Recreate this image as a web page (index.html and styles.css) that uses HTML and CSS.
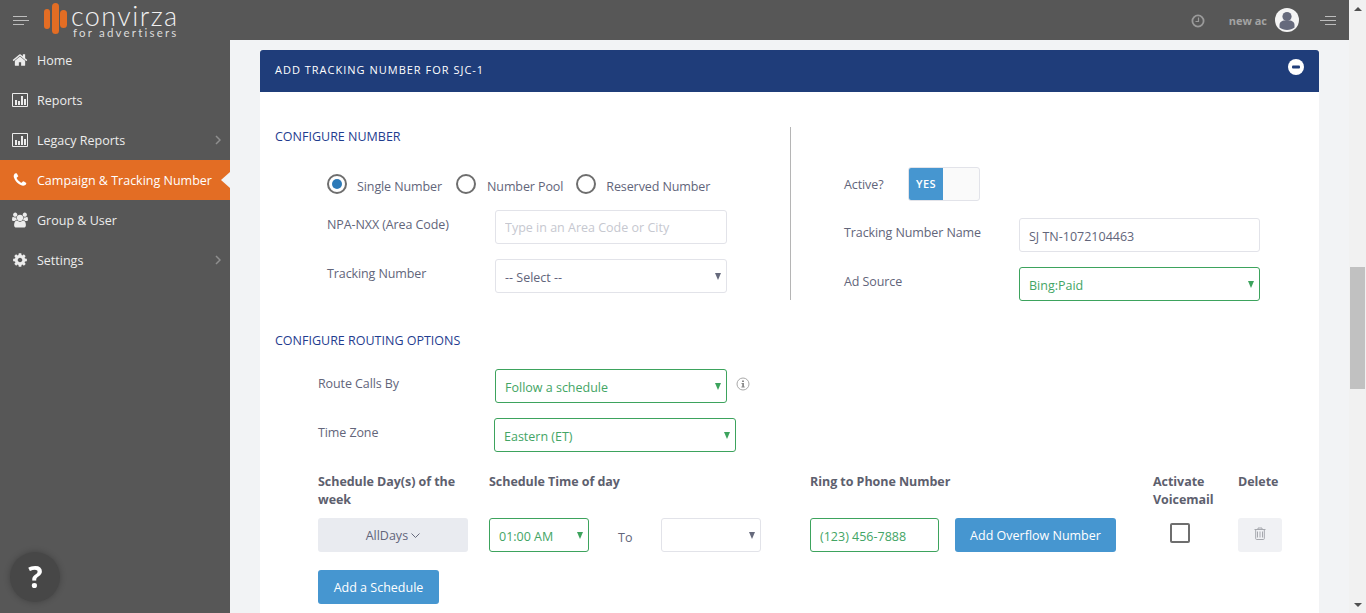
FILE: index.html
```html
<!DOCTYPE html>
<html lang="en">
<head>
    <meta charset="UTF-8">
    <title>Add Tracking Number</title>
    <link rel="stylesheet" href="styles.css">
</head>
<body>
<div class="page">
    <!-- Top bar -->
    <header class="topbar">
        <svg class="menu-icon" width="16" height="10" viewBox="0 0 16 10"><path d="M0 .5h14M0 4.500h16M0 8.500h11" stroke="#bdbdbd" fill="none"/></svg>
        <div class="logo">
            <svg class="logo-mark" width="23" height="31" viewBox="0 0 23 31"><rect x="0" y="6" width="6" height="20" rx="3" fill="#e36d24"/><rect x="8" y="0" width="7" height="31" rx="3.500" fill="#e36d24"/><rect x="16" y="7" width="7" height="18" rx="3.500" fill="#e36d24"/></svg>
            <div class="logo-text">
                <div class="logo-name">convirza</div>
                <div class="logo-sub">for advertisers</div>
            </div>
        </div>
        <div class="topbar-right">
            <svg class="clock-icon" width="14" height="14" viewBox="0 0 14 14"><circle cx="7" cy="7" r="5.600" fill="none" stroke="#9a9a9a" stroke-width="1.800"/><path d="M7.500 3.500v4H4.500" fill="none" stroke="#9a9a9a" stroke-width="1.200"/></svg>
            <span class="user-name">new ac</span>
            <svg class="avatar" width="24" height="24" viewBox="0 0 24 24"><circle cx="12" cy="12" r="12" fill="#f4f4f4"/><circle cx="12" cy="8.500" r="4.600" fill="#666a7c"/><path d="M4.500 19.500v-2.500c0-3 2.500-4.500 5-4.500h5c2.500 0 5 1.500 5 4.500v2.500c-2 1.500-4.500 2.500-7.500 2.500s-5.500-1-7.500-2.500z" fill="#666a7c"/></svg>
            <svg class="menu-icon-right" width="16" height="10" viewBox="0 0 16 10"><path d="M5 .5h11M0 4.500h16M5 8.500h11" stroke="#bdbdbd" fill="none"/></svg>
        </div>
    </header>

    <div class="main">
        <!-- Sidebar -->
        <nav class="sidebar">
            <a class="nav-item">
                <svg class="nav-icon" viewBox="0 0 1792 1792"><path d="M1472 992v480q0 26-19 45t-45 19h-384v-384h-256v384h-384q-26 0-45-19t-19-45v-480q0-1 .5-3t.5-3l575-474 575 474q1 2 1 6zm223-69l-62 74q-8 9-21 11h-3q-13 0-21-7l-692-577-692 577q-12 8-24 7-13-2-21-11l-62-74q-8-10-7-23.500t11-21.500l719-599q32-26 76-26t76 26l244 204v-195q0-14 9-23t23-9h192q14 0 23 9t9 23v408l219 182q10 8 11 21.500t-7 23.500z"/></svg>
                <span>Home</span>
            </a>
            <a class="nav-item">
                <svg class="nav-icon" viewBox="0 0 16 16"><path d="M.5 1.500h15v13H.5z" fill="none" stroke="currentColor"/><path d="M3 8h2v5H3zM6 9h2v4H6zM9 4h2v9H9zM12 7h2v6h-2z"/></svg>
                <span>Reports</span>
            </a>
            <a class="nav-item">
                <svg class="nav-icon" viewBox="0 0 16 16"><path d="M.5 1.500h15v13H.5z" fill="none" stroke="currentColor"/><path d="M3 8h2v5H3zM6 9h2v4H6zM9 4h2v9H9zM12 7h2v6h-2z"/></svg>
                <span>Legacy Reports</span>
                <svg class="nav-arrow" width="6" height="10" viewBox="0 0 6 10"><path d="M1 1l4 4-4 4" fill="none" stroke="#8f8f8f" stroke-width="1.500"/></svg>
            </a>
            <a class="nav-item active">
                <svg class="nav-icon" viewBox="0 0 1792 1792"><path d="M1600 1240q0 27-10 70.500t-21 68.500q-21 50-122 106-94 51-186 51-27 0-53-3.500t-57.500-12.500-47-14.500-55.500-20.500-49-18q-98-35-175-83-127-79-264-216t-216-264q-48-77-83-175-3-9-18-49t-20.500-55.500-14.500-47-12.500-57.500-3.500-53q0-92 51-186 56-101 106-122 25-11 68.500-21t70.500-10q14 0 21 3 18 6 53 76 11 19 30 54t35 63.500 31 53.500q3 4 17.500 25t21.500 35.500 7 28.500q0 20-28.500 50t-62 55-62 53-28.500 46q0 9 5 22.500t8.500 20.500 14 24 11.500 19q76 137 174 235t235 174q2 1 19 11.500t24 14 20.500 8.500 22.500 5q18 0 46-28.500t53-62 55-62 50-28.500q14 0 28.500 7t35.500 21.500 25 17.500q25 15 53.500 31t63.500 35 54 30q70 35 76 53 3 7 3 21z"/></svg>
                <span>Campaign &amp; Tracking Number</span>
            </a>
            <a class="nav-item">
                <svg class="nav-icon" viewBox="0 0 1920 1792"><path d="M593 896q-162 5-265 128h-134q-82 0-138-40.500t-56-118.500q0-353 124-353 6 0 43.500 21t97.500 42.500 119 21.500q67 0 133-23-5 37-5 66 0 139 81 256zm1071 637q0 120-73 189.500t-194 69.500h-874q-121 0-194-69.500t-73-189.500q0-53 3.500-103.500t14-109 26.500-108.500 43-97.500 62-81 85.500-53.500 111.500-20q10 0 43 21.500t73 48 107 48 135 21.500 135-21.500 107-48 73-48 43-21.500q61 0 111.500 20t85.500 53.500 62 81 43 97.500 26.500 108.500 14 109 3.500 103.500zm-1024-1277q0 106-75 181t-181 75-181-75-75-181 75-181 181-75 181 75 75 181zm704 384q0 159-112.500 271.500t-271.500 112.500-271.500-112.500-112.500-271.500 112.500-271.500 271.500-112.500 271.500 112.500 112.500 271.500zm576 225q0 78-56 118.500t-138 40.500h-134q-103-123-265-128 81-117 81-256 0-29-5-66 66 23 133 23 59 0 119-21.500t97.500-42.500 43.500-21q124 0 124 353zm-128-609q0 106-75 181t-181 75-181-75-75-181 75-181 181-75 181 75 75 181z"/></svg>
                <span>Group &amp; User</span>
            </a>
            <a class="nav-item">
                <svg class="nav-icon" viewBox="0 0 1792 1792"><path d="M1152 896q0-106-75-181t-181-75-181 75-75 181 75 181 181 75 181-75 75-181zm512-109v222q0 12-8 23t-20 13l-185 28q-19 54-39 91 35 50 107 138 10 12 10 25t-9 23q-27 37-99 108t-94 71q-12 0-26-9l-138-108q-44 23-91 38-16 136-29 186-7 28-36 28h-222q-14 0-24.500-8.500t-11.500-21.500l-28-184q-49-16-90-37l-141 107q-10 9-25 9-14 0-25-11-126-114-165-168-7-10-7-23 0-12 8-23 15-21 51-66.500t54-70.500q-27-50-41-99l-183-27q-13-2-21-12.500t-8-23.500v-222q0-12 8-23t19-13l186-28q14-46 39-92-40-57-107-138-10-12-10-24 0-10 9-23 26-36 98.500-107.500t94.500-71.500q13 0 26 10l138 107q44-23 91-38 16-136 29-186 7-28 36-28h222q14 0 24.500 8.500t11.500 21.500l28 184q49 16 90 37l142-107q9-9 24-9 13 0 25 10 129 119 165 170 7 8 7 22 0 12-8 23-15 21-51 66.500t-54 70.500q26 50 41 98l183 28q13 2 21 12.500t8 23.500z"/></svg>
                <span>Settings</span>
                <svg class="nav-arrow" width="6" height="10" viewBox="0 0 6 10"><path d="M1 1l4 4-4 4" fill="none" stroke="#8f8f8f" stroke-width="1.500"/></svg>
            </a>
        </nav>

        <!-- Content -->
        <main class="content">
            <div class="card">
                <div class="card-header">
                    <span class="card-title">ADD TRACKING NUMBER FOR SJC-1</span>
                    <svg class="collapse-icon" width="16" height="16" viewBox="0 0 16 16"><circle cx="8" cy="8" r="8" fill="#fff"/><rect x="4" y="6.500" width="8" height="3" rx="1" fill="#1f3d7a"/></svg>
                </div>
                <div class="card-body">
                    <div class="config-row">
                        <div class="config-left">
                            <div class="section-title">CONFIGURE NUMBER</div>
                            <div class="radio-row">
                                <label class="radio-item"><span class="radio checked"></span>Single Number</label>
                                <label class="radio-item radio-two"><span class="radio"></span>Number Pool</label>
                                <label class="radio-item"><span class="radio"></span>Reserved Number</label>
                            </div>
                            <div class="form-row indent-left">
                                <label class="form-label label-left">NPA-NXX (Area Code)</label>
                                <input class="field field-md field-search" type="text" placeholder="Type in an Area Code or City">
                            </div>
                            <div class="form-row indent-left">
                                <label class="form-label label-left">Tracking Number</label>
                                <div class="select-wrap field-md">
                                    <select class="field"><option>-- Select --</option></select>
                                </div>
                            </div>
                        </div>
                        <div class="config-right">
                            <div class="active-row">
                                <label class="form-label active-label">Active?</label>
                                <div class="toggle"><span class="toggle-on">YES</span></div>
                            </div>
                            <div class="form-row">
                                <label class="form-label label-right">Tracking Number Name</label>
                                <input class="field field-lg" type="text" value="SJ TN-1072104463">
                            </div>
                            <div class="form-row">
                                <label class="form-label label-right">Ad Source</label>
                                <div class="select-wrap valid field-lg">
                                    <select class="field"><option>Bing:Paid</option></select>
                                </div>
                            </div>
                        </div>
                    </div>

                    <div class="section-title routing-title">CONFIGURE ROUTING OPTIONS</div>
                    <div class="form-row route-row indent-route">
                        <label class="form-label label-route">Route Calls By</label>
                        <div class="select-wrap valid field-md">
                            <select class="field"><option>Follow a schedule</option></select>
                        </div>
                        <svg class="info-icon" width="14" height="14" viewBox="0 0 14 14"><circle cx="7" cy="7" r="6" fill="none" stroke="#a9a9a9"/><path d="M6 3.500h2v1.500H6zM5.500 6h2.500v3.500h.7v1H5.400v-1h.8V7h-.7z" fill="#8b8b8b"/></svg>
                    </div>
                    <div class="form-row indent-route">
                        <label class="form-label label-zone">Time Zone</label>
                        <div class="select-wrap valid field-zone">
                            <select class="field"><option>Eastern (ET)</option></select>
                        </div>
                    </div>

                    <div class="schedule-grid">
                        <div class="schedule-head head-days">Schedule Day(s) of the week</div>
                        <div class="schedule-head">Schedule Time of day</div>
                        <div class="schedule-head">Ring to Phone Number</div>
                        <div class="schedule-head">Activate Voicemail</div>
                        <div class="schedule-head">Delete</div>

                        <div><button class="days-btn">AllDays <svg width="9" height="5" viewBox="0 0 9 5"><path d="M.5.5l4 4 4-4" fill="none" stroke="#666a7c"/></svg></button></div>
                        <div class="time-cell">
                            <div class="select-wrap valid field-time">
                                <select class="field"><option>01:00 AM</option></select>
                            </div>
                            <span class="to-label">To</span>
                            <div class="select-wrap field-time">
                                <select class="field"><option></option></select>
                            </div>
                        </div>
                        <div class="ring-cell">
                            <input class="field field-phone valid-input" type="text" value="(123) 456-7888">
                            <button class="btn-blue overflow-btn">Add Overflow Number</button>
                        </div>
                        <div class="voicemail-cell"><span class="checkbox"></span></div>
                        <div>
                            <button class="delete-btn">
                                <svg width="12" height="13" viewBox="0 0 12 13"><path d="M.5 2.500h11M4 2.500V1h4v1.500M1.700 2.500v9.200c0 .5.4.8.8.8h7c.4 0 .8-.3.8-.8V2.500" fill="none" stroke="#a6a8ae"/><path d="M3.500 4.500v6M6 4.500v6M8.500 4.500v6" stroke="#a6a8ae"/></svg>
                            </button>
                        </div>
                    </div>
                    <button class="btn-blue add-schedule">Add a Schedule</button>
                </div>
            </div>
        </main>
    </div>
</div>

<!-- Scrollbar -->
<div class="scrollbar">
    <span class="scroll-up"></span>
    <div class="scroll-track"><div class="scroll-thumb"></div></div>
    <span class="scroll-down"></span>
</div>

<div class="help-btn">?</div>
</body>
</html>
```

FILE: styles.css
```css
/* General */
html, body {
    margin: 0;
    height: 100%;
    overflow: hidden;
}

body {
    display: flex;
    font-family: "Open Sans", sans-serif;
    font-size: 12.5px;
    color: #62657a;
}

.page {
    flex: 1;
    min-width: 0;
    display: flex;
    flex-direction: column;
}

/* Top bar */
.topbar {
    height: 40px;
    flex: none;
    background-color: #575757;
    display: flex;
    align-items: center;
}

.menu-icon {
    margin-left: 13px;
    margin-top: 2px;
}

.logo {
    display: flex;
    margin-left: 15px;
}

.logo-text {
    margin-left: 4px;
    color: #f0f0f0;
}

.logo-name {
    font-family: Lato, sans-serif;
    font-weight: 300;
    font-size: 27px;
    line-height: 26px;
    letter-spacing: 1.4px;
}

.logo-sub {
    font-family: Lato, sans-serif;
    font-size: 11.5px;
    line-height: 9px;
    letter-spacing: 2.2px;
    margin-left: 2px;
    margin-top: -1px;
    color: #dcdcdc;
}

.topbar-right {
    margin-left: auto;
    display: flex;
    align-items: center;
}

.clock-icon {
    margin-right: 24px;
    margin-top: 2px;
}

.user-name {
    font-size: 11px;
    font-weight: 700;
    color: #a3a3a3;
    margin-right: 8px;
}

.avatar {
    margin-right: 21px;
}

.menu-icon-right {
    margin-right: 13px;
    margin-top: 1px;
}

/* Sidebar */
.main {
    flex: 1;
    display: flex;
    min-height: 0;
}

.sidebar {
    width: 230px;
    flex: none;
    background-color: #575757;
}

.nav-item {
    position: relative;
    height: 40px;
    display: flex;
    align-items: center;
    color: #ececec;
    padding-left: 12px;
    padding-right: 9px;
}

.nav-icon {
    width: 16px;
    height: 16px;
    fill: currentColor;
    margin-right: 9px;
    flex: none;
}

.nav-arrow {
    margin-left: auto;
}

.nav-item.active {
    background-color: #e36d24;
    color: #fff;
}

/* notch pointing at the content */
.nav-item.active::after {
    content: "";
    position: absolute;
    right: 0;
    top: 12px;
    border-style: solid;
    border-width: 8px 9px 8px 0;
    border-color: transparent #f2f3f5 transparent transparent;
}

/* Content */
.content {
    flex: 1;
    min-width: 0;
    background-color: #f2f3f5;
    padding: 10px 30px 0;
    overflow: hidden;
}

.card {
    background-color: #fff;
    height: 100%;
}

.card-header {
    height: 42px;
    background-color: #1f3d7a;
    border-radius: 3px 3px 0 0;
    display: flex;
    align-items: center;
    justify-content: space-between;
    padding: 0 15px;
    box-sizing: border-box;
    color: #fff;
}

.card-title {
    font-size: 11px;
    letter-spacing: 1px;
    margin-top: -4px;
}

.collapse-icon {
    margin-top: -8px;
}

.card-body {
    padding: 35px 15px 0;
}

.section-title {
    font-size: 12.5px;
    line-height: 18px;
    color: #1f3d8f;
    position: relative;
    top: 1px;
}

.routing-title {
    margin-top: 30px;
}

.config-row {
    display: flex;
}

.config-left {
    width: 515px;
    height: 173px;
    border-right: 1px solid #b5b5b5;
}

.config-right {
    padding-left: 53px;
    padding-top: 40px;
}

/* Radios */
.radio-row {
    display: flex;
    margin-top: 29px;
    padding-left: 52px;
    height: 20px;
}

.radio-item {
    display: flex;
    align-items: flex-start;
    margin-right: 14px;
    line-height: 26px;
    letter-spacing: -.1px;
    height: 20px;
}

.radio-two {
    margin-right: 13px;
}

.radio {
    width: 20px;
    height: 20px;
    box-sizing: border-box;
    border: 2px solid #6e6e6e;
    border-radius: 50%;
    background-color: #fff;
    margin-right: 10px;
    display: flex;
    align-items: center;
    justify-content: center;
}

.radio-two .radio {
    margin-right: 11px;
}

.radio.checked::before {
    content: "";
    width: 10px;
    height: 10px;
    border-radius: 50%;
    background-color: #2d7ab8;
}

/* Form rows */
.form-row {
    display: flex;
    align-items: flex-start;
    margin-top: 15px;
}

.radio-row + .form-row {
    margin-top: 16px;
}

.active-row + .form-row {
    margin-top: 17px;
}

.route-row {
    margin-top: 20px;
}

.indent-left {
    padding-left: 52px;
}

.indent-route {
    padding-left: 43px;
}

.form-label {
    line-height: 18px;
    padding-top: 6px;
    letter-spacing: -.1px;
    flex: none;
}

.label-left {
    width: 168px;
}

.label-right {
    width: 175px;
}

.label-route {
    width: 177px;
}

.label-zone {
    width: 176px;
}

.field {
    height: 34px;
    width: 100%;
    box-sizing: border-box;
    border: 1px solid #e2e3e9;
    border-radius: 3px;
    background-color: #fff;
    padding: 2px 9px 0;
    font-family: "Open Sans", sans-serif;
    font-size: 12.5px;
    color: #62657a;
    outline: none;
    display: block;
}

.field::placeholder {
    color: #c6c8d0;
    opacity: 1;
}

.field-search {
    padding-top: 0;
}

.field-md {
    width: 232px;
}

.field-lg {
    width: 241px;
}

.field-zone {
    width: 242px;
}

.field-time {
    width: 100px;
}

.field-phone {
    width: 129px;
    flex: none;
}

select.field {
    appearance: none;
    -webkit-appearance: none;
}

.select-wrap {
    position: relative;
    flex: none;
}

/* arrow sits over the select */
.select-wrap::after {
    content: "";
    position: absolute;
    right: 6px;
    top: 14px;
    border-style: solid;
    border-width: 7px 3.500px 0;
    border-color: #666a7c transparent transparent;
    pointer-events: none;
}

.select-wrap.valid::after {
    border-top-color: #3da35d;
}

.select-wrap.valid select,
.valid-input {
    border-color: #3da35d;
    color: #43a565;
}

.info-icon {
    margin-left: 9px;
    margin-top: 8px;
}

/* Toggle */
.active-row {
    display: flex;
    align-items: center;
}

.active-label {
    width: 64px;
    padding-top: 2px;
}

.toggle {
    width: 72px;
    height: 34px;
    box-sizing: border-box;
    border: 1px solid #e2e3e9;
    border-radius: 3px;
    background-color: #fafafa;
    overflow: hidden;
}

.toggle-on {
    display: block;
    width: 34px;
    height: 100%;
    background-color: #4696d0;
    color: #fff;
    font-size: 11px;
    font-weight: 600;
    letter-spacing: .5px;
    line-height: 32px;
    text-align: center;
}

/* Schedule table */
.schedule-grid {
    display: grid;
    grid-template-columns: 171px 321px 343px 85px 60px;
    row-gap: 9px;
    margin-top: 20px;
    margin-left: 43px;
}

.schedule-head {
    font-weight: 700;
    line-height: 18px;
    padding-top: 1px;
    letter-spacing: -.05px;
    color: #5d606e;
}

.head-days {
    padding-right: 20px;
}

.days-btn {
    width: 150px;
    height: 34px;
    border: none;
    border-radius: 3px;
    background-color: #e9ebf0;
    color: #62657a;
    font-family: "Open Sans", sans-serif;
    font-size: 12.5px;
}

.days-btn svg {
    vertical-align: 2px;
}

.time-cell,
.ring-cell {
    display: flex;
}

.to-label {
    width: 72px;
    padding: 11px 0 0 29px;
    box-sizing: border-box;
    line-height: 18px;
    flex: none;
}

.btn-blue {
    height: 34px;
    border: none;
    border-radius: 3px;
    background-color: #4696d0;
    color: #fff;
    font-family: "Open Sans", sans-serif;
    font-size: 12.5px;
    padding: 0;
}

.overflow-btn {
    width: 161px;
    margin-left: 16px;
    flex: none;
}

.add-schedule {
    width: 121px;
    margin-top: 18px;
    margin-left: 43px;
    display: block;
}

.voicemail-cell {
    padding: 5px 0 0 17px;
}

.checkbox {
    display: block;
    width: 20px;
    height: 20px;
    box-sizing: border-box;
    border: 2px solid #6e6e6e;
    border-radius: 2px;
}

.delete-btn {
    width: 44px;
    height: 34px;
    border: none;
    border-radius: 3px;
    background-color: #f0f1f4;
    padding: 0;
}

/* Fake browser scrollbar */
.scrollbar {
    width: 17px;
    flex: none;
    background-color: #f1f1f1;
    display: flex;
    flex-direction: column;
    align-items: center;
}

.scroll-up,
.scroll-down {
    width: 0;
    height: 0;
    flex: none;
    border-style: solid;
    border-color: transparent;
}

.scroll-up {
    margin: 7px 0 5px;
    border-width: 0 4px 4px;
    border-bottom-color: #505050;
}

.scroll-down {
    margin: 5px 0 6px;
    border-width: 4px 4px 0;
    border-top-color: #505050;
}

.scroll-track {
    flex: 1;
    width: 100%;
    padding-top: 251px;
    box-sizing: border-box;
}

.scroll-thumb {
    width: 15px;
    height: 122px;
    margin-left: 1px;
    background-color: #c1c1c1;
}

/* Help button */
.help-btn {
    position: fixed;
    left: 10px;
    top: 552px;
    width: 50px;
    height: 50px;
    border-radius: 50%;
    background-color: #474747;
    box-shadow: 0 0 6px rgba(0, 0, 0, .25);
    color: #fff;
    font-family: "Open Sans", sans-serif;
    font-size: 30px;
    font-weight: 700;
    line-height: 50px;
    text-align: center;
    text-indent: 1px;
}
```
